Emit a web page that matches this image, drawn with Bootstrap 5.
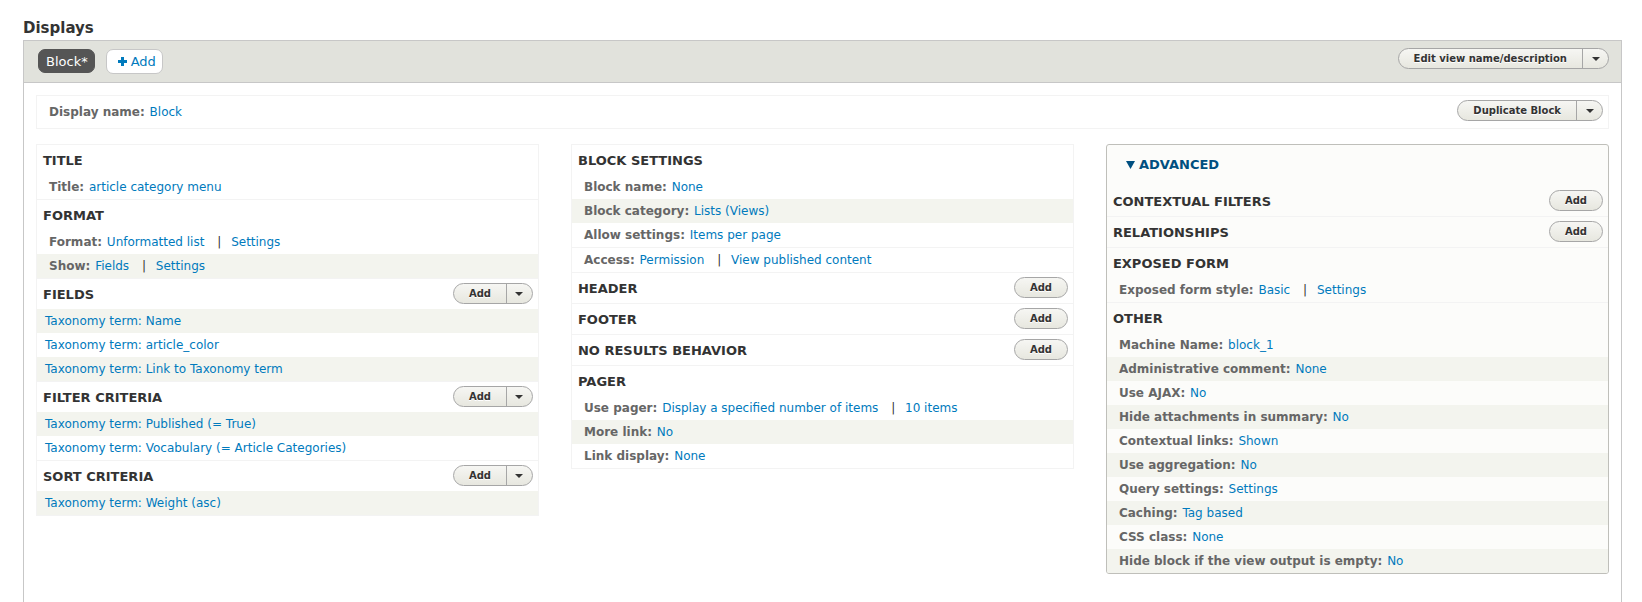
<!DOCTYPE html>
<html lang="en">
<head>
<meta charset="utf-8">
<meta name="viewport" content="width=device-width, initial-scale=1">
<title>Displays</title>
<link href="https://cdn.jsdelivr.net/npm/bootstrap@5.3.0/dist/css/bootstrap.min.css" rel="stylesheet">
<style>
  body { font-family: "DejaVu Sans", sans-serif; font-size: 12px; line-height: 24px; color: #333; background: #fff; }
  a { color: #007abd; text-decoration: none; }
  a:hover { text-decoration: underline; }
  .page { padding: 16px 20px 0 23px; }
  .page-title { font-size: 15px; line-height: 24px; font-weight: 700; }
  .frame { border: 1px solid #c7c7c7; border-bottom: 0; }
  .display-top { background: #e1e2dc; border-bottom: 1px solid #c7c7c7; padding: 7px 12px 8px 14px; min-height: 42px; }
  .tabs { gap: 11px; padding-top: 1px; }
  .tab { font-size: 13px; line-height: 16px; padding: 4px 6px 4px 7px; border-radius: 7px; border: 1px solid #c7c7c7; background: #fff; height: 25px; }
  .tab.current { background: #555; border-color: #555; color: #fff; line-height: 15px; height: 24px; }
  .frame-body { padding: 12px; }
  .display-name { border: 1px solid #f3f3f3; padding: 4px 5px 4px 12px; margin-bottom: 15px; }
  .columns { --bs-gutter-x: 32px; --bs-gutter-y: 16px; }
  .bucket-group { border: 1px solid #f3f3f3; border-bottom: 0; }
  .bucket { border-bottom: 1px solid #f3f3f3; }
  .bucket-head { min-height: 30px; padding: 4px 5px 0 6px; }
  .bucket-head h3 { font-size: 13px; line-height: 24px; font-weight: 700; text-transform: uppercase; }
  .setting { padding: 0 12px; line-height: 24px; min-height: 24px; }
  .setting.item { padding-left: 8px; }
  .setting.alt { background: #f3f4ee; }
  .setting b, .display-name b { color: #666; margin-right: 1px; }
  .sep { margin: 0 6px 0 9px; }
  .drop { height: 21px; border: 1px solid #a6a6a6; border-radius: 11px; background: linear-gradient(#f6f6f3, #e7e7df); overflow: hidden; flex: none; }
  .drop button { border: 0; background: none; padding: 0 15px; color: #333; font-size: 10px; line-height: 19px; font-weight: 700; text-shadow: 0 1px 0 #fff; }
  .drop button + button { border-left: 1px solid #a6a6a6; width: 26px; padding: 0; }
  .advanced { border: 1px solid #bfbfba; border-radius: 3px; background: #fcfcfa; overflow: hidden; }
  .advanced summary { list-style: none; color: #004f80; font-size: 13px; font-weight: 700; line-height: 17px; padding: 11px 19px 13px; text-transform: uppercase; }
  .advanced .bucket:last-child { border-bottom: 0; }
</style>
</head>
<body>
<main class="page d-flex flex-column min-vh-100">
  <h1 class="page-title m-0">Displays</h1>
  <div class="frame flex-grow-1">
    <div class="display-top d-flex justify-content-between align-items-start">
      <nav class="tabs d-flex" aria-label="Displays">
        <a class="tab current" href="#">Block*</a>
        <a class="tab d-flex align-items-center" href="#"><svg class="ms-1 me-1" width="9" height="9" viewBox="0 0 9 9" aria-hidden="true"><path fill="#007abd" d="M3 0h3v3h3v3H6v3H3V6H0V3h3z"/></svg>Add</a>
      </nav>
      <div class="drop d-flex"><button type="button">Edit view name/description</button><button type="button" aria-label="More view actions"><svg width="8" height="4" viewBox="0 0 8 4" class="d-block mx-auto" aria-hidden="true"><path fill="#333" d="M0 0h8L4 4z"/></svg></button></div>
    </div>
    <div class="frame-body">
      <div class="display-name d-flex justify-content-between align-items-start">
        <div><b>Display name:</b> <a href="#">Block</a></div>
        <div class="drop d-flex"><button type="button">Duplicate Block</button><button type="button" aria-label="More display actions"><svg width="8" height="4" viewBox="0 0 8 4" class="d-block mx-auto" aria-hidden="true"><path fill="#333" d="M0 0h8L4 4z"/></svg></button></div>
      </div>
      <div class="row columns">
        <div class="col-md-4">
          <div class="bucket-group">
            <section class="bucket">
              <div class="bucket-head"><h3 class="m-0">Title</h3></div>
              <div class="setting"><b>Title:</b> <a href="#">article category menu</a></div>
            </section>
            <section class="bucket">
              <div class="bucket-head"><h3 class="m-0">Format</h3></div>
              <div class="setting"><b>Format:</b> <a href="#">Unformatted list</a> <span class="sep">|</span> <a href="#">Settings</a></div>
              <div class="setting alt"><b>Show:</b> <a href="#">Fields</a> <span class="sep">|</span> <a href="#">Settings</a></div>
            </section>
            <section class="bucket">
              <div class="bucket-head d-flex justify-content-between"><h3 class="m-0">Fields</h3>
                <div class="drop d-flex"><button type="button">Add</button><button type="button" aria-label="More field actions"><svg width="8" height="4" viewBox="0 0 8 4" class="d-block mx-auto" aria-hidden="true"><path fill="#333" d="M0 0h8L4 4z"/></svg></button></div></div>
              <div class="setting item alt"><a href="#">Taxonomy term: Name</a></div>
              <div class="setting item"><a href="#">Taxonomy term: article_color</a></div>
              <div class="setting item alt"><a href="#">Taxonomy term: Link to Taxonomy term</a></div>
            </section>
            <section class="bucket">
              <div class="bucket-head d-flex justify-content-between"><h3 class="m-0">Filter criteria</h3>
                <div class="drop d-flex"><button type="button">Add</button><button type="button" aria-label="More filter actions"><svg width="8" height="4" viewBox="0 0 8 4" class="d-block mx-auto" aria-hidden="true"><path fill="#333" d="M0 0h8L4 4z"/></svg></button></div></div>
              <div class="setting item alt"><a href="#">Taxonomy term: Published (= True)</a></div>
              <div class="setting item"><a href="#">Taxonomy term: Vocabulary (= Article Categories)</a></div>
            </section>
            <section class="bucket">
              <div class="bucket-head d-flex justify-content-between"><h3 class="m-0">Sort criteria</h3>
                <div class="drop d-flex"><button type="button">Add</button><button type="button" aria-label="More sort actions"><svg width="8" height="4" viewBox="0 0 8 4" class="d-block mx-auto" aria-hidden="true"><path fill="#333" d="M0 0h8L4 4z"/></svg></button></div></div>
              <div class="setting item alt"><a href="#">Taxonomy term: Weight (asc)</a></div>
            </section>
          </div>
        </div>
        <div class="col-md-4">
          <div class="bucket-group">
            <section class="bucket">
              <div class="bucket-head"><h3 class="m-0">Block settings</h3></div>
              <div class="setting"><b>Block name:</b> <a href="#">None</a></div>
              <div class="setting alt"><b>Block category:</b> <a href="#">Lists (Views)</a></div>
              <div class="setting"><b>Allow settings:</b> <a href="#">Items per page</a></div>
            </section>
            <section class="bucket">
              <div class="setting"><b>Access:</b> <a href="#">Permission</a> <span class="sep">|</span> <a href="#">View published content</a></div>
            </section>
            <section class="bucket">
              <div class="bucket-head d-flex justify-content-between"><h3 class="m-0">Header</h3><div class="drop d-flex"><button type="button">Add</button></div></div>
            </section>
            <section class="bucket">
              <div class="bucket-head d-flex justify-content-between"><h3 class="m-0">Footer</h3><div class="drop d-flex"><button type="button">Add</button></div></div>
            </section>
            <section class="bucket">
              <div class="bucket-head d-flex justify-content-between"><h3 class="m-0">No results behavior</h3><div class="drop d-flex"><button type="button">Add</button></div></div>
            </section>
            <section class="bucket">
              <div class="bucket-head"><h3 class="m-0">Pager</h3></div>
              <div class="setting"><b>Use pager:</b> <a href="#">Display a specified number of items</a> <span class="sep">|</span> <a href="#">10 items</a></div>
              <div class="setting alt"><b>More link:</b> <a href="#">No</a></div>
              <div class="setting"><b>Link display:</b> <a href="#">None</a></div>
            </section>
          </div>
        </div>
        <div class="col-md-4">
          <details class="advanced" open>
            <summary class="d-flex align-items-center"><svg class="me-1" width="9" height="8" viewBox="0 0 9 8" aria-hidden="true"><path fill="#004f80" d="M0 0h9L4.500 8z"/></svg>Advanced</summary>
            <section class="bucket">
              <div class="bucket-head d-flex justify-content-between"><h3 class="m-0">Contextual filters</h3><div class="drop d-flex"><button type="button">Add</button></div></div>
            </section>
            <section class="bucket">
              <div class="bucket-head d-flex justify-content-between"><h3 class="m-0">Relationships</h3><div class="drop d-flex"><button type="button">Add</button></div></div>
            </section>
            <section class="bucket">
              <div class="bucket-head"><h3 class="m-0">Exposed form</h3></div>
              <div class="setting"><b>Exposed form style:</b> <a href="#">Basic</a> <span class="sep">|</span> <a href="#">Settings</a></div>
            </section>
            <section class="bucket">
              <div class="bucket-head"><h3 class="m-0">Other</h3></div>
              <div class="setting"><b>Machine Name:</b> <a href="#">block_1</a></div>
              <div class="setting alt"><b>Administrative comment:</b> <a href="#">None</a></div>
              <div class="setting"><b>Use AJAX:</b> <a href="#">No</a></div>
              <div class="setting alt"><b>Hide attachments in summary:</b> <a href="#">No</a></div>
              <div class="setting"><b>Contextual links:</b> <a href="#">Shown</a></div>
              <div class="setting alt"><b>Use aggregation:</b> <a href="#">No</a></div>
              <div class="setting"><b>Query settings:</b> <a href="#">Settings</a></div>
              <div class="setting alt"><b>Caching:</b> <a href="#">Tag based</a></div>
              <div class="setting"><b>CSS class:</b> <a href="#">None</a></div>
              <div class="setting alt"><b>Hide block if the view output is empty:</b> <a href="#">No</a></div>
            </section>
          </details>
        </div>
      </div>
    </div>
  </div>
</main>
<script src="https://cdn.jsdelivr.net/npm/bootstrap@5.3.0/dist/js/bootstrap.bundle.min.js"></script>
</body>
</html>
